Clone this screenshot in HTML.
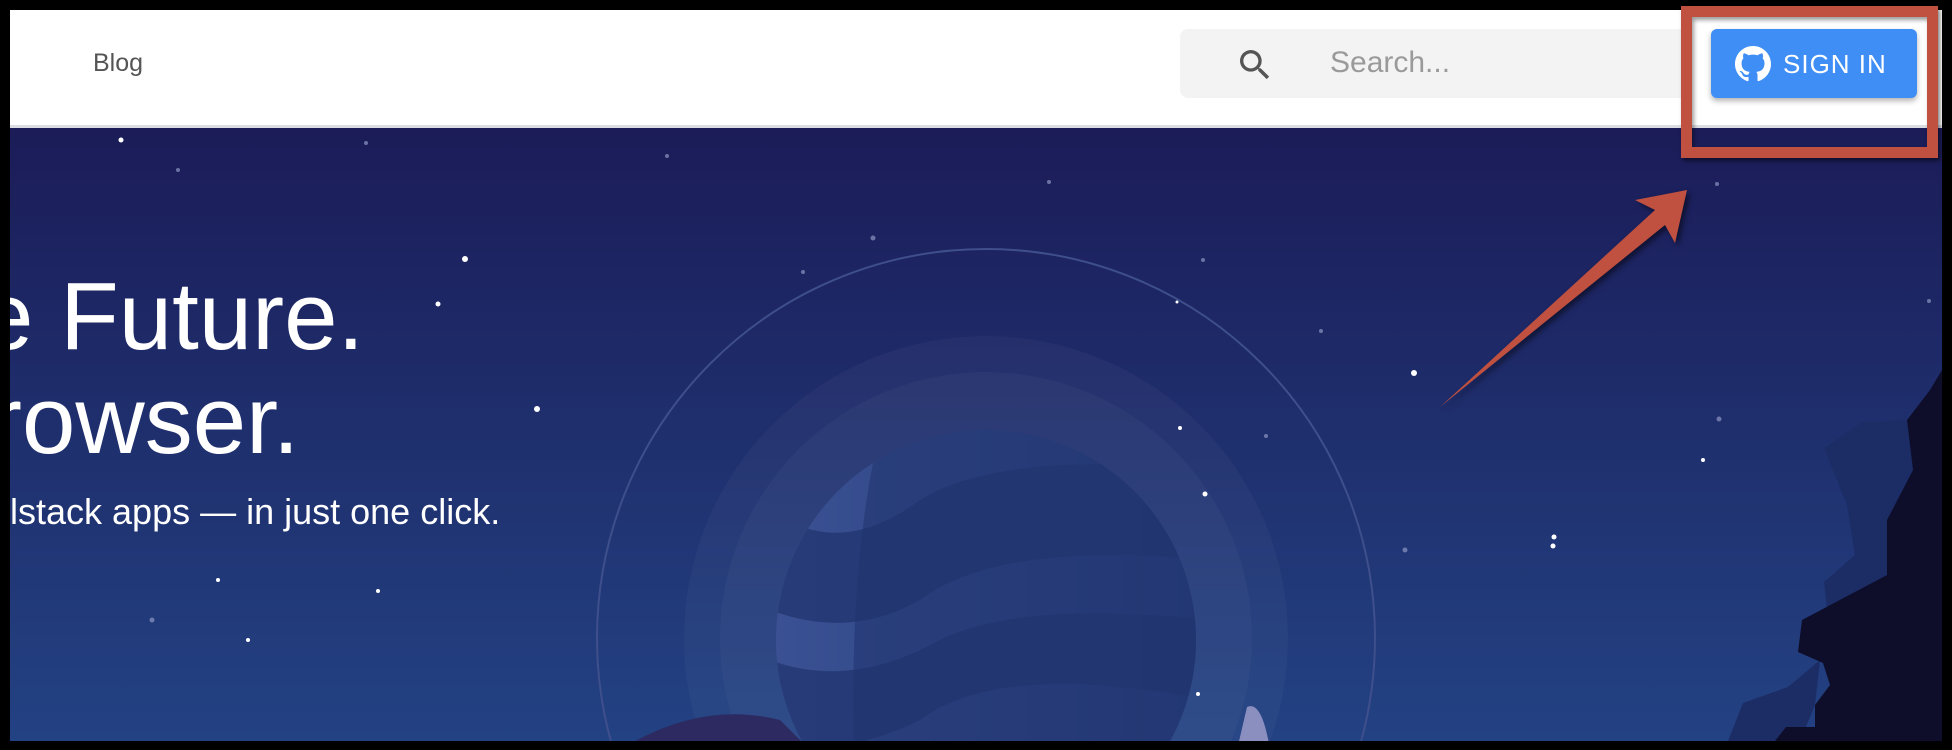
<!DOCTYPE html>
<html><head><meta charset="utf-8">
<style>
html,body{margin:0;padding:0;background:#000;}
body{width:1952px;height:750px;position:relative;overflow:hidden;font-family:"Liberation Sans",sans-serif;}
.nav{position:absolute;left:10px;top:10px;width:1932px;height:118px;background:#fff;border-bottom:3px solid #dcdde3;box-sizing:border-box;}
.blog{position:absolute;left:83px;top:38px;font-size:25px;line-height:30px;color:#555;}
.search{position:absolute;left:1170px;top:19px;width:507px;height:69px;background:#f3f3f3;border-radius:8px;}
.search span{position:absolute;left:150px;top:16px;font-size:30px;line-height:36px;color:#9a9a9a;}
.btn{position:absolute;left:1701px;top:19px;width:206px;height:69px;background:#3f8ef5;border-radius:6px;box-shadow:0 3px 6px rgba(0,0,0,.3);}
.btn span{position:absolute;left:72px;top:20px;font-size:26px;line-height:30px;color:#fff;letter-spacing:1px;}
svg.hero{position:absolute;left:0;top:0;}
.h1{position:absolute;color:#fff;font-size:96px;line-height:110px;white-space:nowrap;}
.sub{position:absolute;left:10px;top:491px;color:#fff;font-size:36px;line-height:42px;white-space:nowrap;}
</style></head><body>
<svg class="hero" width="1952" height="750" viewBox="0 0 1952 750">
<defs>
<linearGradient id="bg" x1="0" y1="0" x2="0" y2="1"><stop offset="0" stop-color="#1b1c58"/><stop offset="1" stop-color="#234283"/></linearGradient>
<linearGradient id="pl" x1="0" y1="0" x2="1" y2="0"><stop offset="0" stop-color="#3a5193"/><stop offset="1" stop-color="#243a78"/></linearGradient>
<clipPath id="hc"><rect x="10" y="128" width="1932" height="613"/></clipPath>
<clipPath id="pc"><circle cx="986" cy="640" r="210"/></clipPath>
</defs>
<g clip-path="url(#hc)">
<rect x="10" y="128" width="1932" height="613" fill="url(#bg)"/>
<circle cx="986" cy="638" r="389" fill="none" stroke="#3e4f8c" stroke-width="2"/>
<circle cx="986" cy="638" r="302" fill="#fff" fill-opacity=".03"/>
<circle cx="986" cy="638" r="266" fill="#fff" fill-opacity=".03"/>
<g clip-path="url(#pc)">
<rect x="770" y="420" width="440" height="440" fill="url(#pl)"/>
<path d="M770 510 Q840 560 920 500 Q1000 450 1210 470 L1210 560 Q1000 540 920 600 Q850 640 770 610Z" fill="#223670" opacity=".8"/>
<path d="M770 660 Q850 690 940 640 Q1020 600 1210 620 L1210 700 Q1000 660 920 720 Q840 760 770 740Z" fill="#223670" opacity=".8"/>
<path d="M880 430 Q840 600 860 860 L1210 860 L1210 420Z" fill="#223670" opacity=".6"/>
</g>
<path d="M620 750 Q700 700 780 720 L810 750Z" fill="#2c2a60"/>
<path d="M1237 750 L1247 707 Q1262 700 1270 750Z" fill="#8b8fc0"/>
<g fill="#fff">
<circle cx="121" cy="140" r="2.5"/><circle cx="465" cy="259" r="3"/><circle cx="438" cy="304" r="2.5"/><circle cx="537" cy="409" r="3"/>
<circle cx="1205" cy="494" r="2.5"/><circle cx="1554" cy="537" r="2.5"/><circle cx="1553" cy="546" r="2.5"/><circle cx="1414" cy="373" r="3"/>
<circle cx="1180" cy="428" r="2"/><circle cx="218" cy="580" r="2"/><circle cx="248" cy="640" r="2"/><circle cx="378" cy="591" r="2"/><circle cx="1198" cy="694" r="2"/><circle cx="1703" cy="460" r="2"/><circle cx="1177" cy="302" r="1.5"/>
</g>
<g fill="#8d96c2" opacity=".7">
<circle cx="178" cy="170" r="2"/><circle cx="366" cy="143" r="2"/><circle cx="667" cy="156" r="2"/><circle cx="1049" cy="182" r="2"/><circle cx="873" cy="238" r="2.5"/><circle cx="1203" cy="260" r="2"/><circle cx="1321" cy="331" r="2"/><circle cx="1266" cy="436" r="2"/><circle cx="803" cy="272" r="2"/><circle cx="1717" cy="184" r="2"/><circle cx="1929" cy="301" r="2"/><circle cx="1405" cy="550" r="2.5"/><circle cx="152" cy="620" r="2.5"/><circle cx="1719" cy="419" r="2.5"/>
</g>
<polygon points="1863,422 1824,448 1847,505 1855,555 1824,582 1827,610 1887,575 1887,520 1913,470 1907,420" fill="#1c2d66"/>
<polygon points="1820,660 1788,687 1743,703 1728,741 1800,741 1815,705" fill="#1c2d66"/>
<polygon points="1942,370 1930,390 1907,420 1913,470 1887,520 1887,575 1802,620 1798,652 1823,663 1830,685 1815,705 1815,727 1786,727 1775,741 1942,741" fill="#0e0e2b"/>
</g>
<polygon points="1687,190 1635,200 1655,210 1440,407 1665,225 1675,243" fill="#c0503f" style="filter:drop-shadow(3px 3px 3px rgba(0,0,0,.5))"/>
</svg>
<div class="nav">
<div class="blog">Blog</div>
<div class="search">
<svg style="position:absolute;left:55px;top:16px" width="40" height="40" viewBox="0 0 24 24"><path d="M15.5 14h-.79l-.28-.27A6.470 6.470 0 0 0 16 9.5 6.5 6.5 0 1 0 9.5 16c1.61 0 3.090-.59 4.230-1.570l.27.28v.79l5 4.990L20.490 19l-4.990-5zm-6 0C7.010 14 5 11.990 5 9.5S7.010 5 9.5 5 14 7.010 14 9.5 11.990 14 9.5 14z" fill="#555"/></svg>
<span>Search...</span></div>
<div class="btn">
<svg style="position:absolute;left:24px;top:17px" width="36" height="36" viewBox="0 0 16 16"><path fill="#fff" d="M8 0C3.58 0 0 3.58 0 8c0 3.54 2.29 6.53 5.47 7.59.4.07.55-.17.55-.38 0-.19-.01-.82-.01-1.49-2.01.37-2.53-.49-2.69-.94-.09-.23-.48-.94-.82-1.13-.28-.15-.68-.52-.01-.53.63-.01 1.08.58 1.23.82.72 1.21 1.87.87 2.330.66.07-.52.28-.87.51-1.07-1.78-.2-3.64-.89-3.64-3.95 0-.87.31-1.59.82-2.15-.08-.2-.36-1.02.08-2.12 0 0 .67-.21 2.2.82.64-.18 1.32-.27 2-.27.68 0 1.36.09 2 .27 1.53-1.04 2.2-.82 2.2-.82.44 1.1.16 1.92.08 2.12.51.56.82 1.27.82 2.15 0 3.07-1.87 3.75-3.65 3.95.29.25.54.73.54 1.48 0 1.07-.01 1.93-.01 2.2 0 .21.15.46.55.38A8.013 8.013 0 0 0 16 8c0-4.42-3.58-8-8-8z"/></svg>
<span>SIGN IN</span></div>
</div>
<div class="h1" style="left:-20px;top:262px">e Future.</div>
<div class="h1" style="left:-10px;top:366px">rowser.</div>
<div class="sub">lstack apps — in just one click.</div>
<div style="position:absolute;left:0;top:0;width:10px;height:750px;background:#000"></div>
<div style="position:absolute;left:0;top:741px;width:1952px;height:9px;background:#000"></div>
<div style="position:absolute;left:0;top:0;width:1952px;height:10px;background:#000"></div>
<div style="position:absolute;left:1942px;top:0;width:10px;height:750px;background:#000"></div>
<div style="position:absolute;left:1681px;top:6px;width:257px;height:152px;box-sizing:border-box;border:11px solid #c0503f;box-shadow:2px 3px 4px rgba(0,0,0,.5), inset 2px 3px 4px rgba(0,0,0,.4);"></div>
</body></html>
